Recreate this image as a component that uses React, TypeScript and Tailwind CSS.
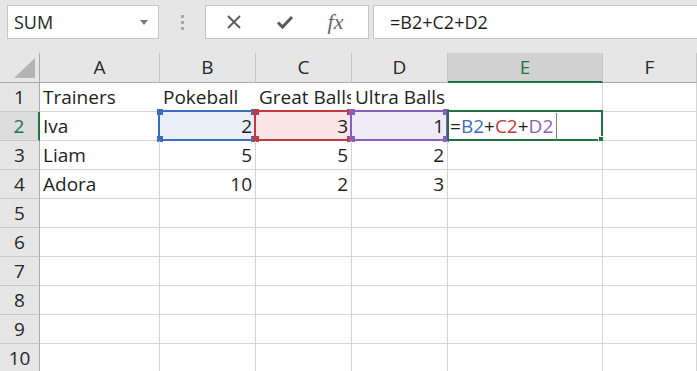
import React from "react";

const FONT = { fontFamily: "'Open Sans', 'Noto Sans', sans-serif" };

const cols = ["A", "B", "C", "D", "E", "F"];

type Cell = { v?: string; num?: boolean; clip?: boolean; noR?: boolean };

const rows: Cell[][] = [
  [{ v: "Trainers", noR: true }, { v: "Pokeball", noR: true }, { v: "Great Balls", clip: true, noR: true }, { v: "Ultra Balls", noR: true }, {}, {}],
  [{ v: "Iva" }, { v: "2", num: true }, { v: "3", num: true }, { v: "1", num: true }, {}, {}],
  [{ v: "Liam" }, { v: "5", num: true }, { v: "5", num: true }, { v: "2", num: true }, {}, {}],
  [{ v: "Adora" }, { v: "10", num: true }, { v: "2", num: true }, { v: "3", num: true }, {}, {}],
  [{}, {}, {}, {}, {}, {}],
  [{}, {}, {}, {}, {}, {}],
  [{}, {}, {}, {}, {}, {}],
  [{}, {}, {}, {}, {}, {}],
  [{}, {}, {}, {}, {}, {}],
  [{}, {}, {}, {}, {}, {}],
];

function RefBox({ border, fill }: { border: string; fill: string }) {
  const sq = "absolute w-[6px] h-[6px]";
  return (
    <div className="absolute -top-[2px] -left-[2px] -right-[1px] -bottom-[1px] pointer-events-none">
      <div className="absolute inset-0 border-2" style={{ borderColor: border, background: fill }} />
      <div className={`${sq} -top-[1px] -left-[1px]`} style={{ background: border }} />
      <div className={`${sq} -top-[1px] -right-[1px]`} style={{ background: border }} />
      <div className={`${sq} -bottom-[1px] -left-[1px]`} style={{ background: border }} />
      <div className={`${sq} -bottom-[1px] -right-[1px]`} style={{ background: border }} />
    </div>
  );
}

const refColors: Record<number, { border: string; fill: string }> = {
  1: { border: "#3d6cc0", fill: "#e9eef8" },
  2: { border: "#c23a40", fill: "#fbe6e7" },
  3: { border: "#8a5fbb", fill: "#f0eaf7" },
};

export default function App() {
  return (
    <div className="w-[697px] h-[371px] overflow-hidden bg-white text-[#1e1e1e]" style={FONT}>
      {/* toolbar */}
      <div className="h-[53px] bg-[#e6e6e6] flex items-start pt-[5px]">
        <div className="ml-[7px] w-[152px] h-[34px] bg-white border border-[#c6c6c6] flex items-center pl-[6px] pr-[10px] justify-between">
          <span className="text-[18px] text-[#262626]">SUM</span>
          <svg width="8" height="5" viewBox="0 0 8 5">
            <path d="M0 0h8L4 5z" fill="#7a7a7a" />
          </svg>
        </div>
        <div className="w-[46px] h-[34px] flex flex-col items-center justify-center gap-[3px]">
          <div className="w-[3px] h-[3px] bg-[#a8a8a8]" />
          <div className="w-[3px] h-[3px] bg-[#a8a8a8]" />
          <div className="w-[3px] h-[3px] bg-[#a8a8a8]" />
        </div>
        <div className="w-[164px] h-[34px] bg-white border border-[#c6c6c6] flex items-center">
          <div className="w-[56px] flex justify-center">
            <svg width="16" height="16" viewBox="0 0 16 16">
              <path d="M2 2L14 14M14 2L2 14" stroke="#5a5a5a" strokeWidth="1.8" />
            </svg>
          </div>
          <div className="w-[45px] flex justify-center">
            <svg width="18" height="16" viewBox="0 0 18 16">
              <path d="M2 8.5L6.5 13L16 3" stroke="#5a5a5a" strokeWidth="3" fill="none" />
            </svg>
          </div>
          <div className="flex-1 flex justify-center pr-[4px]">
            <span className="text-[22px] italic text-[#666] leading-none" style={{ fontFamily: "'Liberation Serif', serif" }}>
              fx
            </span>
          </div>
        </div>
        <div className="ml-[4px] flex-1 h-[34px] bg-white border border-[#c6c6c6] border-r-0 flex items-center pl-[16px]">
          <span className="text-[18px] text-[#1e1e1e]">=B2+C2+D2</span>
        </div>
      </div>

      {/* grid */}
      <div className="grid grid-cols-[40px_120px_96px_96px_96px_155px_1fr]">
        {/* header row */}
        <div className="h-[30px] bg-[#e6e6e6] border-r border-b border-[#ababab] relative">
          <svg className="absolute right-[4px] bottom-[4px]" width="21" height="20" viewBox="0 0 21 20">
            <path d="M21 0V20H0z" fill="#b4b4b4" />
          </svg>
        </div>
        {cols.map((c) => {
          const sel = c === "E";
          return (
            <div
              key={c}
              className={
                sel
                  ? "h-[30px] bg-[#d2d2d2] border-r border-r-[#c6c6c6] border-b-2 border-b-[#217346] flex items-center justify-center text-[19px] text-[#217346]"
                  : "h-[30px] bg-[#e6e6e6] border-r border-r-[#c6c6c6] border-b border-b-[#ababab] flex items-center justify-center text-[19px] text-[#262626]"
              }
            >
              <span className={sel ? "mt-[1px]" : ""}>{c}</span>
            </div>
          );
        })}

        {rows.map((row, ri) => {
          const rn = ri + 1;
          const selRow = rn === 2;
          return (
            <React.Fragment key={rn}>
              <div
                className={
                  selRow
                    ? "h-[29px] bg-[#dcdcdc] border-r-2 border-r-[#217346] border-b border-b-[#c6c6c6] flex items-center justify-center text-[19px] text-[#217346]"
                    : "h-[29px] bg-[#e6e6e6] border-r border-r-[#ababab] border-b border-b-[#c6c6c6] flex items-center justify-center text-[19px] text-[#262626]"
                }
              >
                {rn}
              </div>
              {row.map((cell, ci) => {
                const ref = selRow ? refColors[ci] : undefined;
                const isE2 = selRow && ci === 4;
                return (
                  <div
                    key={ci}
                    className={
                      "h-[29px] relative border-b border-[#d4d4d4] " +
                      (cell.noR ? "border-r border-r-transparent" : "border-r border-r-[#d4d4d4]")
                    }
                  >
                    {ref && <RefBox border={ref.border} fill={ref.fill} />}
                    {cell.v && (
                      <div
                        className={
                          "absolute inset-0 flex items-center text-[19px] whitespace-nowrap overflow-hidden " +
                          (cell.num ? "justify-end pr-[3px]" : "pl-[3px]")
                        }
                      >
                        {cell.v}
                      </div>
                    )}
                    {isE2 && (
                      <>
                        <div className="absolute -top-[2px] -left-[1px] -right-[1px] -bottom-[1px] border-2 border-[#217346]">
                          <div className="absolute -right-[3px] -bottom-[3px] w-[6px] h-[6px] bg-[#217346] border border-white" />
                        </div>
                        <div className="absolute inset-0 flex items-center pl-[2px] text-[19px] whitespace-nowrap">
                          <span>=</span>
                          <span className="text-[#3d6cc0]">B2</span>
                          <span>+</span>
                          <span className="text-[#c23a40]">C2</span>
                          <span>+</span>
                          <span className="text-[#8a5fbb]">D2</span>
                          <span className="ml-[3px] w-[1px] h-[27px] bg-[#808080]" />
                        </div>
                      </>
                    )}
                  </div>
                );
              })}
            </React.Fragment>
          );
        })}
      </div>
    </div>
  );
}
